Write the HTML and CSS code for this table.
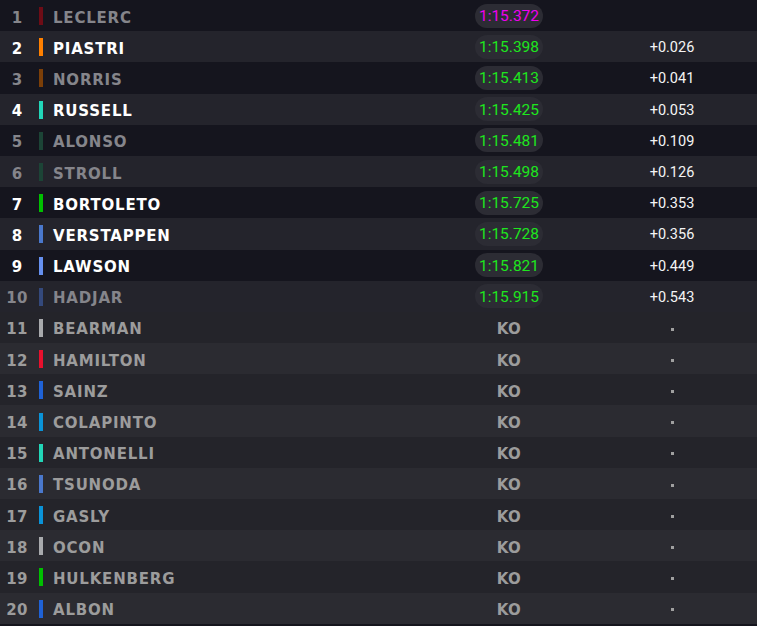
FILE: index.html
```html
<!DOCTYPE html>
<html>
<head>
<meta charset="utf-8">
<link rel="stylesheet" href="styles.css">
</head>
<body>
<div class="table">
  <div class="row odd dim"><span class="pos">1</span><span class="bar c-fer-d"></span><span class="name">LECLERC</span><span class="time"><span class="pill purple">1:15.372</span></span><span class="gap"></span></div>
  <div class="row even"><span class="pos">2</span><span class="bar c-mcl"></span><span class="name">PIASTRI</span><span class="time"><span class="pill">1:15.398</span></span><span class="gap">+0.026</span></div>
  <div class="row odd dim"><span class="pos">3</span><span class="bar c-mcl-d"></span><span class="name">NORRIS</span><span class="time"><span class="pill">1:15.413</span></span><span class="gap">+0.041</span></div>
  <div class="row even"><span class="pos">4</span><span class="bar c-mer"></span><span class="name">RUSSELL</span><span class="time"><span class="pill">1:15.425</span></span><span class="gap">+0.053</span></div>
  <div class="row odd dim"><span class="pos">5</span><span class="bar c-am-d"></span><span class="name">ALONSO</span><span class="time"><span class="pill">1:15.481</span></span><span class="gap">+0.109</span></div>
  <div class="row even dim"><span class="pos">6</span><span class="bar c-am-d"></span><span class="name">STROLL</span><span class="time"><span class="pill">1:15.498</span></span><span class="gap">+0.126</span></div>
  <div class="row odd"><span class="pos">7</span><span class="bar c-sau"></span><span class="name">BORTOLETO</span><span class="time"><span class="pill">1:15.725</span></span><span class="gap">+0.353</span></div>
  <div class="row even"><span class="pos">8</span><span class="bar c-rb"></span><span class="name">VERSTAPPEN</span><span class="time"><span class="pill">1:15.728</span></span><span class="gap">+0.356</span></div>
  <div class="row odd"><span class="pos">9</span><span class="bar c-vcarb"></span><span class="name">LAWSON</span><span class="time"><span class="pill">1:15.821</span></span><span class="gap">+0.449</span></div>
  <div class="row even dim"><span class="pos">10</span><span class="bar c-vcarb-d"></span><span class="name">HADJAR</span><span class="time"><span class="pill">1:15.915</span></span><span class="gap">+0.543</span></div>
  <div class="row out-odd out"><span class="pos">11</span><span class="bar c-haas"></span><span class="name">BEARMAN</span><span class="time"><span class="ko">KO</span></span><span class="gap"><span class="dot"></span></span></div>
  <div class="row out-even out"><span class="pos">12</span><span class="bar c-fer"></span><span class="name">HAMILTON</span><span class="time"><span class="ko">KO</span></span><span class="gap"><span class="dot"></span></span></div>
  <div class="row out-odd out"><span class="pos">13</span><span class="bar c-wil"></span><span class="name">SAINZ</span><span class="time"><span class="ko">KO</span></span><span class="gap"><span class="dot"></span></span></div>
  <div class="row out-even out"><span class="pos">14</span><span class="bar c-alp"></span><span class="name">COLAPINTO</span><span class="time"><span class="ko">KO</span></span><span class="gap"><span class="dot"></span></span></div>
  <div class="row out-odd out"><span class="pos">15</span><span class="bar c-mer"></span><span class="name">ANTONELLI</span><span class="time"><span class="ko">KO</span></span><span class="gap"><span class="dot"></span></span></div>
  <div class="row out-even out"><span class="pos">16</span><span class="bar c-rb"></span><span class="name">TSUNODA</span><span class="time"><span class="ko">KO</span></span><span class="gap"><span class="dot"></span></span></div>
  <div class="row out-odd out"><span class="pos">17</span><span class="bar c-alp"></span><span class="name">GASLY</span><span class="time"><span class="ko">KO</span></span><span class="gap"><span class="dot"></span></span></div>
  <div class="row out-even out"><span class="pos">18</span><span class="bar c-haas"></span><span class="name">OCON</span><span class="time"><span class="ko">KO</span></span><span class="gap"><span class="dot"></span></span></div>
  <div class="row out-odd out"><span class="pos">19</span><span class="bar c-sau"></span><span class="name">HULKENBERG</span><span class="time"><span class="ko">KO</span></span><span class="gap"><span class="dot"></span></span></div>
  <div class="row out-even out"><span class="pos">20</span><span class="bar c-wil"></span><span class="name">ALBON</span><span class="time"><span class="ko">KO</span></span><span class="gap"><span class="dot"></span></span></div>
</div>
</body>
</html>
```
FILE: styles.css
```css
html, body {
  margin: 0;
  padding: 0;
}
body {
  background: #15151d;
  width: 757px;
  height: 626px;
  overflow: hidden;
}
.table {
  display: flex;
  flex-direction: column;
}
.row {
  display: grid;
  grid-template-columns: 34px 4px 1fr 120px 188px;
  align-items: center;
  height: 31.2px;
  font-family: "DejaVu Sans", sans-serif;
  color: #ffffff;
}
.row.odd { background: #15151e; }
.row.even { background: #24242c; }
.row.out-odd { background: #24242a; }
.row.out-even { background: #2b2b31; }

.pos {
  text-align: center;
  font-weight: bold;
  font-size: 15px;
  letter-spacing: 0.3px;
  padding-top: 4px;
}
.bar {
  margin-left: 5px;
  width: 4px;
  height: 18px;
  margin-top: 1px;
}
.name {
  margin-left: 15px;
  font-weight: bold;
  font-size: 15px;
  letter-spacing: 0.8px;
  padding-top: 4px;
}
.time {
  display: flex;
  justify-content: center;
}
.pill {
  display: inline-flex;
  align-items: center;
  justify-content: center;
  width: 68px;
  height: 24px;
  border-radius: 12px;
  background: #2c2c34;
  color: #1ee61e;
  font-family: Roboto, sans-serif;
  font-size: 15.5px;
  padding-top: 1px;
  box-sizing: border-box;
}
.pill.purple { color: #f000f0; }
.ko {
  font-weight: bold;
  font-size: 15px;
  letter-spacing: 0.3px;
  color: #9c9c9c;
  padding-top: 4px;
}
.gap {
  padding-left: 18px;
  text-align: center;
  font-family: Roboto, sans-serif;
  font-size: 14.5px;
  color: #f4f4f4;
  padding-top: 2px;
}
.dot {
  display: inline-block;
  width: 3px;
  height: 3px;
  background: #a0a0a0;
  vertical-align: middle;
}

.dim .pos, .dim .name { color: #85858b; }
.out .pos, .out .name { color: #9c9c9c; }

.c-fer-d { background: #6e0c16; }
.c-fer { background: #e8102d; }
.c-mcl { background: #ff8000; }
.c-mcl-d { background: #7c3f08; }
.c-mer { background: #22d6b8; }
.c-am-d { background: #1c4436; }
.c-sau { background: #00c000; }
.c-rb { background: #4a78cc; }
.c-vcarb { background: #6690f0; }
.c-vcarb-d { background: #34497c; }
.c-haas { background: #a8aaad; }
.c-wil { background: #1f62d6; }
.c-alp { background: #0a93d8; }
```
